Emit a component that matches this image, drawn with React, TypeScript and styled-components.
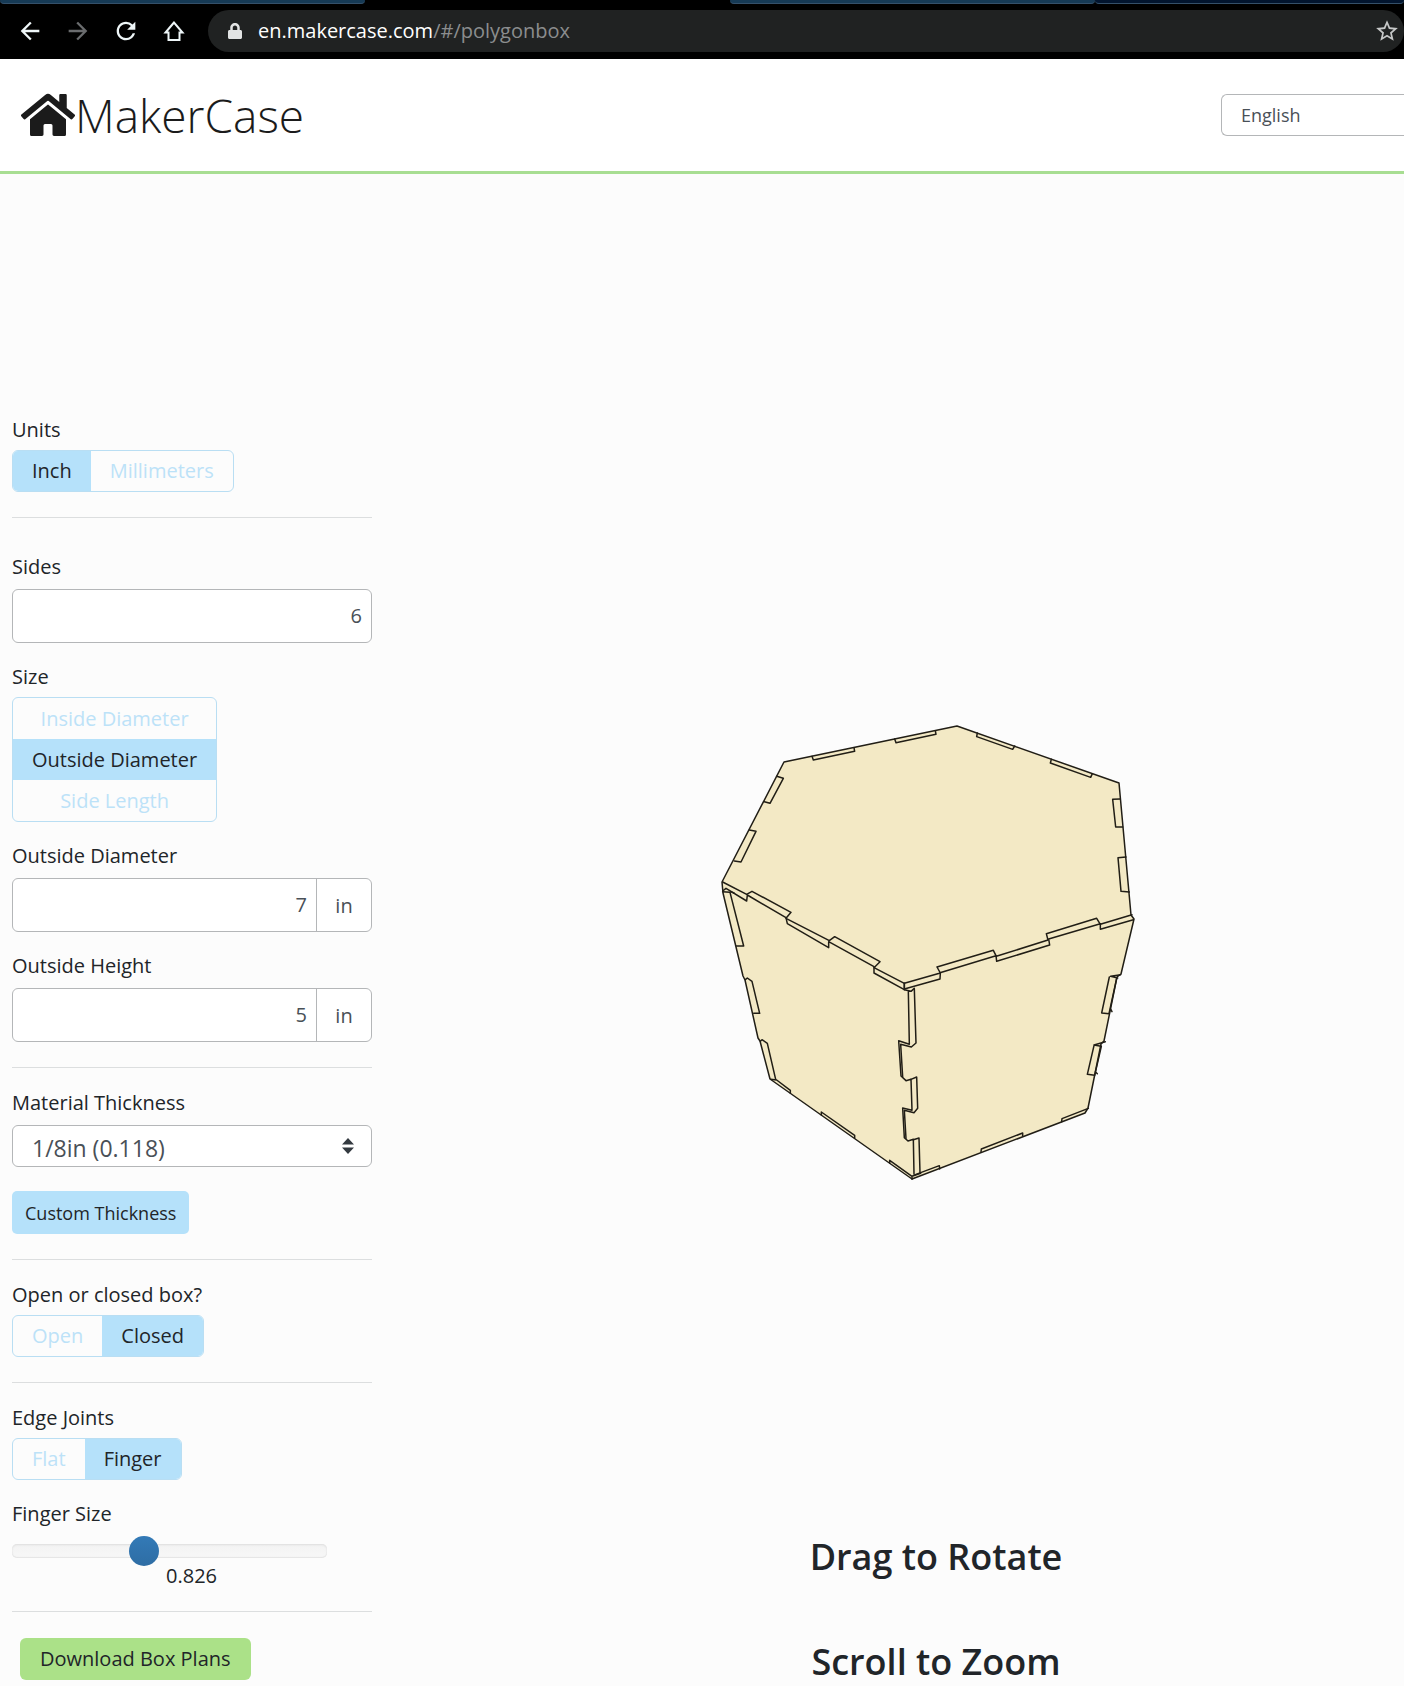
import React, { useState } from "react";
import styled, { createGlobalStyle, css } from "styled-components";
import { FaHome, FaLock } from "react-icons/fa";
import { MdArrowBack, MdArrowForward, MdRefresh, MdStarBorder } from "react-icons/md";

const sky = "#b5e1fa";
const skyLine = "#b9def3";
const ink = "#212529";
const green = "#abe188";

const GlobalStyle = createGlobalStyle`
  *, *::before, *::after { box-sizing: border-box; }
  body {
    margin: 0;
    background: #fcfcfc;
    color: ${ink};
    font-family: "Open Sans", "Noto Sans", sans-serif;
    font-size: 20px;
    line-height: 32px;
    overflow-x: hidden;
  }
  button, input, select { font: inherit; color: inherit; margin: 0; }
`;

const Chrome = styled.div`
  background: #000;
  height: 59px;
  display: flex;
  flex-direction: column;
`;

const TabStrip = styled.div`
  display: grid;
  grid-template-columns: 26% 26% 26% 22%;
  height: 4px;
`;

const Tab = styled.div<{ $color: string }>`
  background: ${(p) => p.$color};
  border-bottom: 1px solid ${(p) => (p.$color === "#000" ? "#000" : "#34506a")};
  border-radius: 0 0 6px 6px;
`;

const Toolbar = styled.div`
  display: flex;
  align-items: center;
  padding: 6px 0 0 16px;
`;

const NavButton = styled.button<{ $dim?: boolean }>`
  border: 0;
  padding: 0;
  width: 28px;
  height: 28px;
  margin-right: 20px;
  background: none;
  color: ${(p) => (p.$dim ? "#6a6c6e" : "#eef6f8")};
  svg { display: block; width: 28px; height: 28px; }
`;

const AddressBar = styled.div`
  flex: 1;
  display: flex;
  align-items: center;
  height: 42px;
  padding: 0 4px 0 20px;
  border-radius: 21px;
  background: #202222;
  color: #fff;
  font-size: 20px;
`;

const LockIcon = styled(FaLock)`
  width: 14px;
  height: 16px;
  color: #e2e4e4;
  margin-right: 16px;
`;

const Url = styled.span`
  flex: 1;
  span { color: #8b8d8e; }
`;

const StarButton = styled.button`
  border: 0;
  padding: 0;
  background: none;
  color: #c6c8c8;
  svg { display: block; width: 26px; height: 26px; }
`;

const Header = styled.header`
  display: flex;
  align-items: center;
  justify-content: space-between;
  height: 115px;
  padding-left: 21px;
  background: #fff;
  border-bottom: 3px solid #a8de92;
`;

const Brand = styled.a`
  display: flex;
  align-items: center;
  color: #1b1b1b;
  text-decoration: none;
  font-size: 46px;
  line-height: 64px;
  font-weight: 350;
  svg { width: 54px; height: 48px; }
`;

const LanguageSelect = styled.select`
  appearance: none;
  width: 183px;
  height: 42px;
  padding: 0 19px;
  border: 1px solid #b4b6b8;
  border-right: 0;
  border-radius: 6px 0 0 6px;
  background: #fff;
  color: #495057;
  font-size: 18px;
`;

const Main = styled.main`
  display: flex;
  align-items: stretch;
`;

const Sidebar = styled.form`
  width: 372px;
  flex: none;
  padding: 240px 0 6px 12px;
`;

const Field = styled.div`
  & + & { margin-top: 18px; }
`;

const labelText = css`
  display: block;
  padding: 0;
  line-height: 32px;
`;

const Label = styled.label`
  ${labelText}
  margin-bottom: 6px;
`;

const ChoiceSet = styled.fieldset`
  border: 0;
  margin: 0;
  padding: 0;
  min-width: 0;
`;

const Legend = styled.legend`
  ${labelText}
  margin-bottom: 4px;
`;

const Group = styled.div<{ $vertical?: boolean }>`
  display: inline-flex;
  vertical-align: top;
  flex-direction: ${(p) => (p.$vertical ? "column" : "row")};
  border: 1px solid ${skyLine};
  border-radius: 6px;
  overflow: hidden;
`;

const Choice = styled.button<{ $active: boolean; $tall?: boolean }>`
  height: ${(p) => (p.$tall ? 41 : 40)}px;
  padding: 0 19px;
  border: 0;
  line-height: 40px;
  background: ${(p) => (p.$active ? sky : "transparent")};
  color: ${(p) => (p.$active ? ink : "#bce2f8")};
`;

const InputBox = styled.div`
  display: flex;
  height: 54px;
  border: 1px solid #b4b6b8;
  border-radius: 6px;
  background: #fff;
  color: #495057;
  overflow: hidden;
`;

const NumberInput = styled.input`
  flex: 1;
  min-width: 0;
  border: 0;
  padding: 0 9px;
  background: none;
  outline: none;
  text-align: right;
`;

const Unit = styled.span`
  width: 55px;
  border-left: 1px solid #b4b6b8;
  text-align: center;
  line-height: 54px;
`;

const Divider = styled.hr<{ $after?: number }>`
  height: 1px;
  border: 0;
  margin: 25px 0 ${(p) => p.$after ?? 19}px;
  background: #dcdedf;
`;

const SelectWrap = styled.div`
  display: grid;
  align-items: center;
  margin-bottom: 24px;
  > * { grid-area: 1 / 1; }
  svg { justify-self: end; margin-right: 18px; pointer-events: none; }
`;

const ThicknessSelect = styled.select`
  appearance: none;
  width: 100%;
  height: 42px;
  padding: 3px 19px 0;
  border: 1px solid #b4b6b8;
  border-radius: 6px;
  background: #fff;
  color: #495057;
  font-size: 23px;
`;

const CustomButton = styled.button`
  display: block;
  height: 43px;
  padding: 0 13px;
  border: 0;
  border-radius: 5px;
  background: ${sky};
  font-size: 18px;
`;

const Slider = styled.input`
  appearance: none;
  display: block;
  width: 315px;
  height: 30px;
  background: none;
  &::-webkit-slider-runnable-track {
    height: 14px;
    border-radius: 5px;
    background: linear-gradient(#f3f3f3, #f7f7f7);
    box-shadow: inset 0 1px 2px #dedede, inset 0 -1px 1px #e4e4e4;
  }
  &::-webkit-slider-thumb {
    appearance: none;
    width: 30px;
    height: 30px;
    margin-top: -8px;
    border-radius: 50%;
    background: linear-gradient(#337ab7, #2e6da4);
  }
`;

const SliderValue = styled.output`
  display: block;
  padding-left: 154px;
  line-height: 20px;
`;

const DownloadButton = styled.button`
  display: block;
  height: 42px;
  margin: 26px 0 0 8px;
  padding: 0 20px;
  border: 0;
  border-radius: 6px;
  background: ${green};
`;

const Viewer = styled.section`
  flex: 1;
  display: flex;
  flex-direction: column;
  align-items: center;
  justify-content: flex-end;
  padding-left: 96px;
`;

const BoxDrawing = styled.svg`
  width: 440px;
  height: 490px;
  margin-bottom: 332px;
`;

const Hint = styled.h2`
  margin: 0;
  font-size: 36px;
  font-weight: 600;
  line-height: 48px;
  & + & { margin-top: 57px; }
`;

type ChoicesProps = { legend: string; options: string[]; initial: string; vertical?: boolean };

function Choices({ legend, options, initial, vertical }: ChoicesProps) {
  const [value, setValue] = useState(initial);
  return (
    <Field as={ChoiceSet}>
      <Legend>{legend}</Legend>
      <Group $vertical={vertical}>
        {options.map((o) => (
          <Choice
            key={o}
            type="button"
            $active={o === value}
            $tall={vertical}
            aria-pressed={o === value}
            onClick={() => setValue(o)}
          >
            {o}
          </Choice>
        ))}
      </Group>
    </Field>
  );
}

function NumberField({ id, label, initial, unit }: { id: string; label: string; initial: string; unit?: string }) {
  const [value, setValue] = useState(initial);
  return (
    <Field>
      <Label htmlFor={id}>{label}</Label>
      <InputBox>
        <NumberInput id={id} inputMode="decimal" value={value} onChange={(e) => setValue(e.target.value)} />
        {unit && <Unit>{unit}</Unit>}
      </InputBox>
    </Field>
  );
}

// The finger joints are drawn per quadrant, in thirds of a unit.
function HexBox() {
  return (
    <BoxDrawing viewBox="716 710 440 490" role="img" aria-label="Six sided box">
      <path
        fill="#f3e9c5"
        stroke="#211e16"
        strokeWidth="1.5"
        strokeLinejoin="round"
        d="M784 761 L957 725 L1119 782 L1131 914 L1134 918 L1121 973 L1117 976 L1104 1040 L1101 1043 L1088 1107 L1085 1112 L912 1178 L770 1078 L760 1040 L758 1037 L745 979 L743 975 L723 892 L722 881 Z"
      />
      <g fill="none" stroke="#211e16" strokeWidth="4.5" strokeLinejoin="round" strokeLinecap="round">
        <g transform="translate(710 710) scale(.333333)">
          <path d="M306 136 L310 147 L434 121 L432 110 M554 84 L558 95 L678 70 L676 59" />
          <path d="M200 196 L220 202 L180 277 L163 272 M118 357 L138 361 L93 453 L73 450" />
          <path d="M38 513 L110 550 L126 541 L243 604 L228 622 L358 689 L374 677 L510 752 L492 770 L583 817 V834" />
          <path d="M38 540 L48 532 L110 570 L112 552 L228 620 L232 638 L356 710 V692 L492 767" />
          <path d="M492 770 V786 L583 836 M38 542 L60 544 L101 705 H79 M62 542 L72 546" />
        </g>
        <g transform="translate(920 710) scale(.333333)">
          <path d="M172 66 L170 77 L278 115 L284 105 M394 145 L391 156 L512 199 L517 188" />
          <path d="M600 264 L578 265 L587 348 H608 M618 438 L594 440 L603 541 L628 543" />
          <path d="M-47 817 L-47 834 L60 804 L61 786 L51 768 L220 718 L229 736 L384 687 L379 668 L530 622 L541 640 L636 611" />
          <path d="M-47 817 L61 786 M60 785 L228 734 L230 751 L389 702 L386 684 L541 638 V655 L640 626" />
        </g>
        <g transform="translate(710 930) scale(.333333)">
          <path d="M106 146 L112 141 L126 151 L149 247 H131 M151 331 L156 326 L172 337 L197 445" />
          <path d="M583 176 L603 181 L613 172 M595 181 L598 340 L566 329 L573 435 L588 449 L603 445 L606 538 L578 531 L583 620 L594 630 L610 625 L612 728" />
          <path d="M613 174 L618 336 L604 348 L572 340 L578 438 M603 445 L620 438 L623 532 L612 545 L583 538 L588 622 M610 626 L627 621 L630 725" />
          <path d="M182 445 L200 447 L241 478 V487 M334 552 V543 L434 613 V622 M539 697 V688 L606 736 L632 727 M606 738 V745" />
        </g>
        <g transform="translate(920 930) scale(.333333)">
          <path d="M602 131 L572 136 L593 141 M568 138 L545 246 L567 248 L590 142 M572 234 L576 242" />
          <path d="M556 332 L522 342 L543 346 M522 344 L502 430 L524 433 L544 346 M526 422 L532 428" />
          <path d="M505 532 L426 563 L425 572 M308 615 V606 L184 654 L183 663 M59 714 L58 704 L-20 733" />
        </g>
      </g>
    </BoxDrawing>
  );
}

export default function App() {
  const [finger, setFinger] = useState(41);
  return (
    <>
      <GlobalStyle />
      <Chrome>
        <TabStrip>
          <Tab $color="#163a55" />
          <Tab $color="#000" />
          <Tab $color="#163a55" />
          <Tab $color="#02152f" />
        </TabStrip>
        <Toolbar>
          <NavButton aria-label="Back"><MdArrowBack /></NavButton>
          <NavButton aria-label="Forward" $dim><MdArrowForward /></NavButton>
          <NavButton aria-label="Reload"><MdRefresh /></NavButton>
          <NavButton aria-label="Home">
            <svg viewBox="0 0 28 28" fill="none" stroke="currentColor" strokeWidth="2">
              <path d="M14 5.500 L5.500 15.500 H8.500 V23 H19.500 V15.500 H22.500 Z" />
            </svg>
          </NavButton>
          <AddressBar>
            <LockIcon />
            <Url>en.makercase.com<span>/#/polygonbox</span></Url>
            <StarButton aria-label="Bookmark"><MdStarBorder /></StarButton>
          </AddressBar>
        </Toolbar>
      </Chrome>
      <Header>
        <Brand href="#/"><FaHome />MakerCase</Brand>
        <LanguageSelect aria-label="Language" defaultValue="English">
          <option>English</option>
        </LanguageSelect>
      </Header>
      <Main>
        <Sidebar onSubmit={(e: React.FormEvent) => e.preventDefault()}>
          <Choices legend="Units" options={["Inch", "Millimeters"]} initial="Inch" />
          <Divider $after={33} />
          <NumberField id="sides" label="Sides" initial="6" />
          <Choices legend="Size" options={["Inside Diameter", "Outside Diameter", "Side Length"]} initial="Outside Diameter" vertical />
          <NumberField id="diameter" label="Outside Diameter" initial="7" unit="in" />
          <NumberField id="height" label="Outside Height" initial="5" unit="in" />
          <Divider />
          <Label htmlFor="thickness">Material Thickness</Label>
          <SelectWrap>
            <ThicknessSelect id="thickness" defaultValue="1/8in (0.118)">
              <option>1/8in (0.118)</option>
            </ThicknessSelect>
            <svg width="12" height="16" viewBox="0 0 12 16" fill="#343a40" aria-hidden="true">
              <path d="M6 0 L12 6.500 H0 Z M0 9.500 H12 L6 16 Z" />
            </svg>
          </SelectWrap>
          <CustomButton type="button">Custom Thickness</CustomButton>
          <Divider />
          <Choices legend="Open or closed box?" options={["Open", "Closed"]} initial="Closed" />
          <Divider />
          <Choices legend="Edge Joints" options={["Flat", "Finger"]} initial="Finger" />
          <Field>
            <Label htmlFor="finger">Finger Size</Label>
            <Slider id="finger" type="range" min={0} max={100} value={finger} onChange={(e) => setFinger(Number(e.target.value))} />
            <SliderValue htmlFor="finger">{(0.826 + (finger - 41) * 0.02).toFixed(3)}</SliderValue>
          </Field>
          <Divider />
          <DownloadButton type="button">Download Box Plans</DownloadButton>
        </Sidebar>
        <Viewer>
          <HexBox />
          <Hint>Drag to Rotate</Hint>
          <Hint>Scroll to Zoom</Hint>
        </Viewer>
      </Main>
    </>
  );
}
